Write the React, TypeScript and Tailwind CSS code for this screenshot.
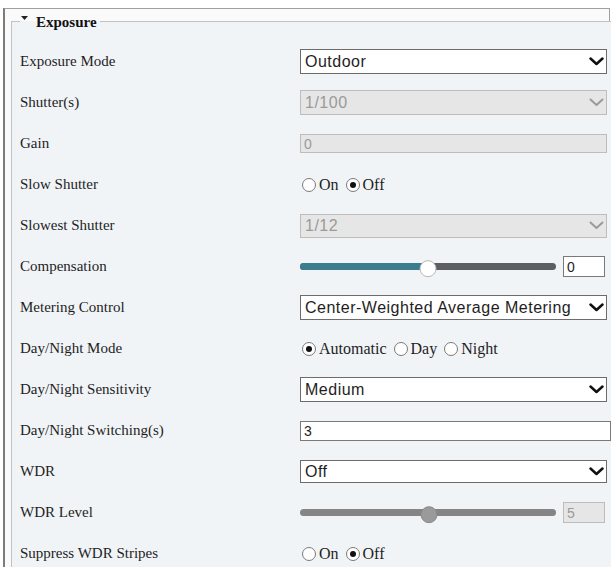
import React from "react";

const serif = { fontFamily: '"Liberation Serif", "Times New Roman", serif' };
const sans = { fontFamily: '"Liberation Sans", Arial, sans-serif' };

function Chevron({ disabled }: { disabled?: boolean }) {
  return (
    <svg width="15" height="9" viewBox="0 0 15 9" className="shrink-0">
      <path
        d="M1.5 1.5 L7.5 7 L13.5 1.5"
        fill="none"
        stroke={disabled ? "#9a9a9a" : "#111"}
        strokeWidth={disabled ? 2 : 2.5}
        strokeLinecap="round"
        strokeLinejoin="round"
      />
    </svg>
  );
}

function Select({ value, disabled, h = "h-[25px]" }: { value: string; disabled?: boolean; h?: string }) {
  return (
    <div
      className={`${h} w-[307px] flex items-center justify-between pl-[4px] pr-[2px] border ${
        disabled ? "bg-[#e6e6e6] border-[#bdbdbd] text-[#9a9a9a]" : "bg-white border-[#6c6c6c] text-[#1e1e1e]"
      }`}
      style={sans}
    >
      <span className="text-[16px] tracking-[0.5px] leading-none">{value}</span>
      <Chevron disabled={disabled} />
    </div>
  );
}

function TextInput({ value, disabled, w = "w-[307px]", h = "h-[20px]" }: { value: string; disabled?: boolean; w?: string; h?: string }) {
  return (
    <div
      className={`${w} ${h} flex items-center pl-[3px] border ${
        disabled ? "bg-[#e6e6e6] border-[#bdbdbd] text-[#9a9a9a]" : "bg-white border-[#7a7a7a] text-[#1e1e1e]"
      }`}
      style={sans}
    >
      <span className="text-[14px] leading-none">{value}</span>
    </div>
  );
}

function Radio({ checked }: { checked?: boolean }) {
  return (
    <span className="w-[14px] h-[14px] rounded-full border border-[#7a7a7a] bg-white flex items-center justify-center shrink-0">
      {checked && <span className="w-[6px] h-[6px] rounded-full bg-[#111]" />}
    </span>
  );
}

function RadioGroup({ options, checked }: { options: string[]; checked: number }) {
  return (
    <div className="flex items-center gap-[7px] text-[16px] text-[#1e1e1e] pl-[2px]" style={serif}>
      {options.map((o, i) => (
        <span key={o} className="flex items-center gap-[3px]">
          <Radio checked={i === checked} />
          <span>{o}</span>
        </span>
      ))}
    </div>
  );
}

function Slider({ pct, value, disabled }: { pct: number; value: string; disabled?: boolean }) {
  return (
    <div className="flex items-center">
      <div className={`relative w-[256px] h-[7px] rounded-full ${disabled ? "bg-[#858585]" : "bg-[#5b5f62]"}`}>
        {!disabled && (
          <div className="absolute left-0 top-0 h-full rounded-full bg-[#3d7b8f]" style={{ width: `${pct}%` }} />
        )}
        <div
          className={`absolute top-1/2 w-[17px] h-[17px] rounded-full border ${
            disabled ? "bg-[#9a9a9a] border-[#8a8a8a]" : "bg-white border-[#b8b8b8]"
          }`}
          style={{ left: `${pct}%`, transform: "translate(-50%, -40%)" }}
        />
      </div>
      <div className="ml-[7px]">
        <TextInput value={value} disabled={disabled} w="w-[42px]" h="h-[21px]" />
      </div>
    </div>
  );
}

function Row({ label, children }: { label: string; children: React.ReactNode }) {
  return (
    <div className="h-[41px] flex items-center">
      <div className="w-[280px] text-[15px] text-[#1e1e1e] shrink-0" style={serif}>
        {label}
      </div>
      <div className="flex-1">{children}</div>
    </div>
  );
}

export default function App() {
  return (
    <div className="w-[615px] h-[567px] bg-white overflow-hidden pt-[8px] pl-[3px] pr-[5px]">
      <div className="h-[600px] border-t border-t-[#a0a0a0] border-l-2 border-l-[#7c7c7c] border-r border-r-[#a0a0a0] bg-[#fafafa] pt-[3px] pl-[6px]">
        <fieldset className="border-t border-l border-[#c2c2c2] bg-[#f1f4f7] pl-[8px] pt-[11px] h-[580px]">
          <legend className="px-[1px] leading-[18px] flex items-center" style={serif}>
            <span className="flex items-center gap-[8px]">
              <svg width="7" height="4" viewBox="0 0 7 4" className="-mt-[6px]">
                <path d="M0 0 L7 0 L3.5 4 Z" fill="#222" />
              </svg>
              <span className="text-[15px] font-bold text-[#111] pr-[2px] translate-y-[1px]">Exposure</span>
            </span>
          </legend>
          <Row label="Exposure Mode">
            <Select value="Outdoor" />
          </Row>
          <Row label="Shutter(s)">
            <Select value="1/100" disabled h="h-[25px]" />
          </Row>
          <Row label="Gain">
            <TextInput value="0" disabled h="h-[19px]" />
          </Row>
          <Row label="Slow Shutter">
            <RadioGroup options={["On", "Off"]} checked={1} />
          </Row>
          <Row label="Slowest Shutter">
            <Select value="1/12" disabled h="h-[24px]" />
          </Row>
          <Row label="Compensation">
            <Slider pct={50} value="0" />
          </Row>
          <Row label="Metering Control">
            <Select value="Center-Weighted Average Metering" />
          </Row>
          <Row label="Day/Night Mode">
            <RadioGroup options={["Automatic", "Day", "Night"]} checked={0} />
          </Row>
          <Row label="Day/Night Sensitivity">
            <Select value="Medium" />
          </Row>
          <Row label="Day/Night Switching(s)">
            <TextInput value="3" w="w-[311px]" h="h-[20px]" />
          </Row>
          <Row label="WDR">
            <Select value="Off" h="h-[23px]" />
          </Row>
          <Row label="WDR Level">
            <Slider pct={50.5} value="5" disabled />
          </Row>
          <Row label="Suppress WDR Stripes">
            <RadioGroup options={["On", "Off"]} checked={1} />
          </Row>
        </fieldset>
      </div>
    </div>
  );
}
